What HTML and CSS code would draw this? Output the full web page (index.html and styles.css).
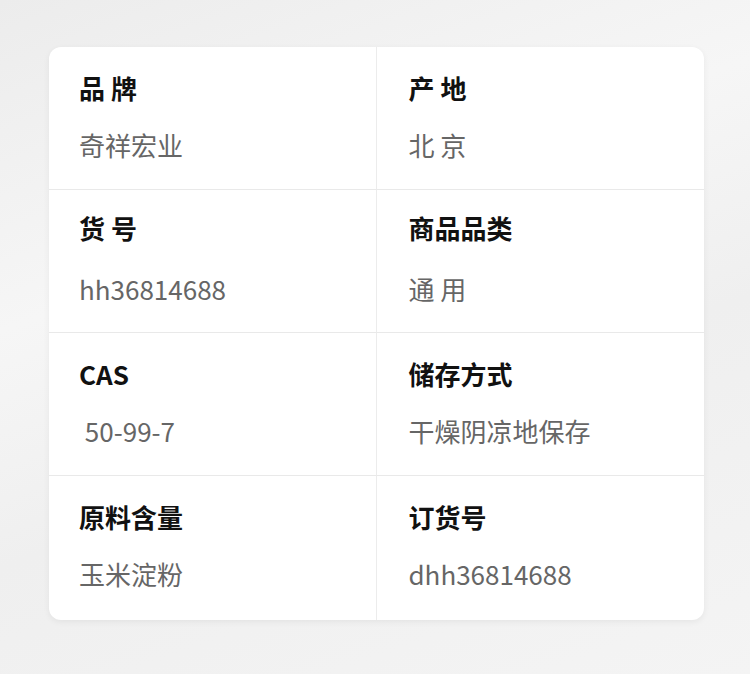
FILE: index.html
```html
<!DOCTYPE html>
<html lang="zh-CN">
<head>
    <meta charset="UTF-8">
    <meta name="viewport" content="width=device-width, initial-scale=1.0">
    <title>商品参数</title>
    <link rel="stylesheet" href="styles.css">
</head>
<body>
    <div class="spec-card">
        <div class="spec-cell">
            <div class="spec-label">品 牌</div>
            <div class="spec-value">奇祥宏业</div>
        </div>
        <div class="spec-cell">
            <div class="spec-label">产 地</div>
            <div class="spec-value">北 京</div>
        </div>
        <div class="spec-cell row-tight">
            <div class="spec-label">货 号</div>
            <div class="spec-value">hh36814688</div>
        </div>
        <div class="spec-cell row-tight">
            <div class="spec-label">商品品类</div>
            <div class="spec-value">通 用</div>
        </div>
        <div class="spec-cell">
            <div class="spec-label">CAS</div>
            <div class="spec-value">&nbsp;50-99-7</div>
        </div>
        <div class="spec-cell">
            <div class="spec-label">储存方式</div>
            <div class="spec-value">干燥阴凉地保存</div>
        </div>
        <div class="spec-cell">
            <div class="spec-label">原料含量</div>
            <div class="spec-value">玉米淀粉</div>
        </div>
        <div class="spec-cell">
            <div class="spec-label">订货号</div>
            <div class="spec-value">dhh36814688</div>
        </div>
    </div>
</body>
</html>
```

FILE: styles.css
```css
html, body {
    margin: 0;
    height: 100%;
}
body {
    font-family: "Noto Sans CJK SC", "Noto Sans", sans-serif;
    background: linear-gradient(160deg, #ececec 0%, #f6f6f6 35%, #efefef 60%, #f4f4f4 100%);
    padding: 47px 0 0 49px;
    box-sizing: border-box;
}
.spec-card {
    width: 655px;
    background: #fff;
    border-radius: 12px;
    box-shadow: 0 2px 6px rgba(0,0,0,0.06);
    display: grid;
    grid-template-columns: 1fr 1fr;
    overflow: hidden;
}
.spec-cell {
    height: 143px;
    box-sizing: border-box;
    padding: 23px 0 0 30px;
    border-bottom: 1px solid #e9e9e9;
}
.spec-cell:nth-child(odd) {
    border-right: 1px solid #ececec;
}
.spec-cell:nth-child(even) {
    padding-left: 32px;
}
.spec-cell:nth-last-child(-n+2) {
    border-bottom: none;
    height: 144px;
}
.spec-label {
    font-size: 26px;
    font-weight: bold;
    line-height: 36px;
    color: #111;
}
.spec-value {
    font-size: 26px;
    line-height: 36px;
    margin-top: 21px;
    color: #666;
}
.row-tight {
    padding-top: 20px;
}
.row-tight .spec-value {
    margin-top: 25px;
}
```
